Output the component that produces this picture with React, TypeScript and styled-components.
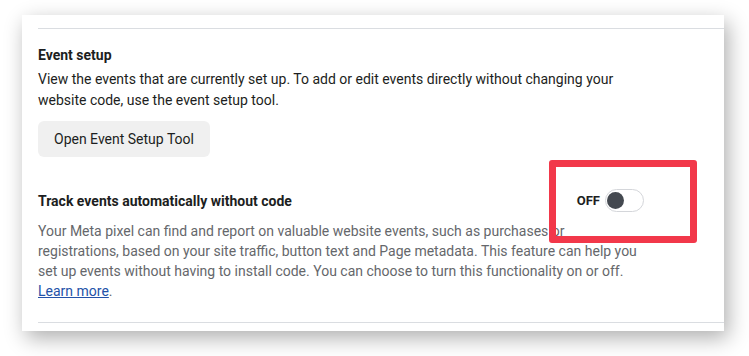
import styled, { createGlobalStyle } from "styled-components";

const GlobalStyle = createGlobalStyle`
  html, body {
    margin: 0;
    padding: 0;
    background: #ffffff;
  }
  body {
    font-family: Roboto, "Liberation Sans", Arial, sans-serif;
    -webkit-font-smoothing: antialiased;
  }
`;

const Page = styled.div`
  width: 749px;
  height: 356px;
  padding: 15px 0 0 22px;
  box-sizing: border-box;
  overflow: hidden;
`;

const Card = styled.section`
  position: relative;
  width: 702px;
  height: 316px;
  background: #ffffff;
  box-shadow: 4px 7px 20px rgba(0, 0, 0, 0.32);
  padding: 13px 0 0 16px;
  box-sizing: border-box;
`;

const Divider = styled.div`
  height: 1px;
  background: #dadde1;
`;

const Content = styled.div`
  width: 606px;
  padding: 16px 0 21px;
  display: flex;
  flex-direction: column;
`;

const Heading = styled.h3`
  margin: 0;
  font-size: 14px;
  line-height: 20px;
  font-weight: 700;
  color: #1c1e21;
`;

const Text = styled.p<{ $muted?: boolean }>`
  margin: ${(p) => (p.$muted ? "9px" : "4px")} 0 0;
  font-size: 14px;
  line-height: ${(p) => (p.$muted ? "20px" : "21px")};
  color: ${(p) => (p.$muted ? "#65676b" : "#1c1e21")};
`;

const Button = styled.button`
  align-self: flex-start;
  margin-top: 10px;
  height: 36px;
  padding: 0 16px;
  border: none;
  border-radius: 6px;
  background: #f0f0f0;
  font-family: inherit;
  font-size: 14px;
  color: #1c1e21;
  cursor: pointer;
`;

const Row = styled.div`
  margin-top: 32px;
  display: flex;
  align-items: center;
  justify-content: space-between;
`;

const ToggleGroup = styled.div`
  display: flex;
  align-items: center;
  gap: 5px;
`;

const State = styled.span`
  font-size: 13px;
  font-weight: 700;
  color: #1c1e21;
`;

const Switch = styled.span`
  width: 36px;
  height: 21px;
  border: 1px solid #d4d6da;
  border-radius: 12px;
  background: #ffffff;
  display: flex;
  align-items: center;
  padding-left: 1px;
  box-sizing: content-box;
`;

const Knob = styled.span`
  width: 17px;
  height: 17px;
  border-radius: 50%;
  background: #444950;
`;

const Link = styled.a`
  color: #2452a8;
  text-decoration: underline;
`;

const Highlight = styled.div`
  position: absolute;
  left: 527px;
  top: 145px;
  width: 148px;
  height: 83px;
  box-sizing: border-box;
  border: 7px solid #f2384a;
  border-radius: 3px;
  pointer-events: none;
`;

export default function App() {
  return (
    <>
      <GlobalStyle />
      <Page>
        <Card>
          <Divider />
          <Content>
            <Heading>Event setup</Heading>
            <Text>
              View the events that are currently set up. To add or edit events directly without changing your
              website code, use the event setup tool.
            </Text>
            <Button>Open Event Setup Tool</Button>
            <Row>
              <Heading>Track events automatically without code</Heading>
              <ToggleGroup>
                <State>OFF</State>
                <Switch>
                  <Knob />
                </Switch>
              </ToggleGroup>
            </Row>
            <Text $muted>
              Your Meta pixel can find and report on valuable website events, such as purchases or
              registrations, based on your site traffic, button text and Page metadata. This feature can help you
              set up events without having to install code. You can choose to turn this functionality on or off.{" "}
              <Link href="#">Learn more</Link>.
            </Text>
          </Content>
          <Divider />
          <Highlight />
        </Card>
      </Page>
    </>
  );
}
